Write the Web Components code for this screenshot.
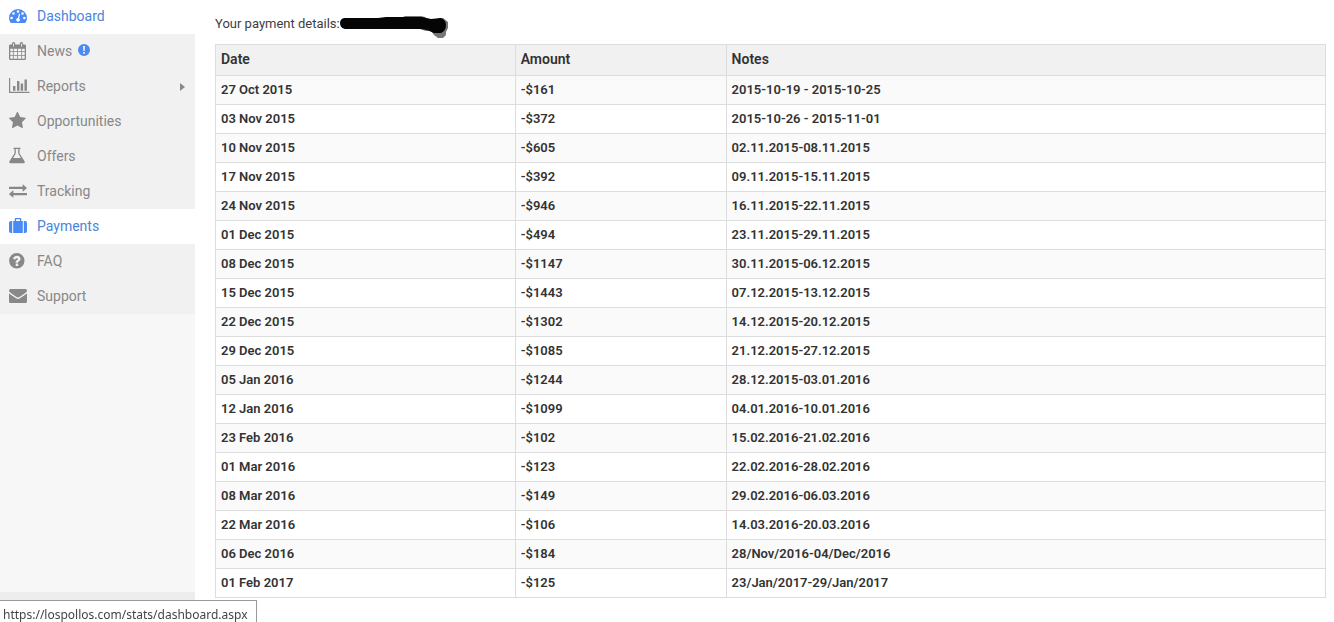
<!DOCTYPE html>
<html lang="en">
<head>
<meta charset="utf-8">
<meta name="viewport" content="width=device-width, initial-scale=1">
<title>Payments</title>
<style>
  body{
    margin:0;
    background:#fff;
    color:#3d3d3d;
    font:13px/18px Roboto, "Liberation Sans", sans-serif;
  }
</style>
</head>
<body>
<stats-layout>
  <side-menu slot="side">
    <menu-item icon="dashboard" href="#dashboard" active>Dashboard</menu-item>
    <menu-item icon="calendar" href="#news" alert>News</menu-item>
    <menu-item icon="chart" href="#reports" submenu>Reports</menu-item>
    <menu-item icon="star" href="#opportunities">Opportunities</menu-item>
    <menu-item icon="flask" href="#offers">Offers</menu-item>
    <menu-item icon="exchange" href="#tracking">Tracking</menu-item>
    <menu-item icon="suitcase" href="#payments" active>Payments</menu-item>
    <menu-item icon="question" href="#faq">FAQ</menu-item>
    <menu-item icon="envelope" href="#support">Support</menu-item>
  </side-menu>
  <payment-details>Your payment details:</payment-details>
  <payment-table></payment-table>
</stats-layout>
<status-bar>https://lospollos.com/stats/dashboard.aspx</status-bar>

<script>
(() => {
  // icons share a 22x19 canvas
  const ICONS = {
    dashboard: `<path fill-rule="evenodd" d="M9 2a9 9 0 0 1 9 9q0 2.6-1.4 4.6-.3.4-.8.4H2.2q-.5 0-.8-.4Q0 13.600 0 11a9 9 0 0 1 9-9zM2.600 9.700a1.300 1.300 0 1 0 0 2.600 1.300 1.300 0 0 0 0-2.600zM4.500 5.200a1.300 1.300 0 1 0 0 2.600 1.300 1.300 0 0 0 0-2.600zM9 3.300a1.300 1.300 0 1 0 0 2.600 1.300 1.300 0 0 0 0-2.600zM13.500 5.200a1.300 1.300 0 1 0 0 2.600 1.300 1.300 0 0 0 0-2.600zM15.400 9.700a1.300 1.300 0 1 0 0 2.600 1.300 1.300 0 0 0 0-2.600zM9.900 7.200l-1 3.800a1.900 1.900 0 1 0 1.200.3l1-3.700a.6.600 0 0 0-1.200-.4z"/>`,
    calendar: `<path fill-rule="evenodd" d="M1.300 2.500H3V1.600Q3 0 4.300 0h.5Q6.200 0 6.200 1.600v.9h4.600v-.9Q10.800 0 12.200 0h.5Q14 0 14 1.600v.9h1.700q1.300 0 1.300 1.300v12.900q0 1.300-1.300 1.300H1.300Q0 18 0 16.700V3.800q0-1.300 1.300-1.300zM4.200 1.200v3.500H5V1.200zM12 1.200v3.500h.8V1.200zM1.300 6.700v2.500h2.600V6.700zM4.700 6.700v2.500h3.400V6.700zM8.900 6.700v2.500h3.400V6.700zM13.100 6.700v2.500h2.600V6.700zM1.300 10v3h2.600v-3zM4.700 10v3h3.400v-3zM8.900 10v3h3.400v-3zM13.100 10v3h2.600v-3zM1.300 13.800v2.900h2.600v-2.900zM4.700 13.800v2.900h3.400v-2.900zM8.900 13.800v2.900h3.400v-2.900zM13.100 13.800v2.900h2.600v-2.900z"/>`,
    chart: `<path d="M0 1h1.200v13.800h19.300V16H0zM4 9h2.400v4.800H4zM8 4h2.400v9.800H8zM11.700 6.500h2.400v7.300h-2.400zM15.500 2.600h2.400v11.200h-2.400z"/>`,
    star: `<path transform="translate(-.7 -.5) scale(.0102)" d="M1728 647q0 22-26 48l-363 354 86 500q1 7 1 20 0 21-10.500 35.500t-30.500 14.500q-19 0-40-12l-449-236-449 236q-22 12-40 12-21 0-31.500-14.500t-10.500-35.500q0-6 2-20l86-500-364-354q-25-27-25-48 0-37 56-46l502-73 225-455q19-41 49-41t49 41l225 455 502 73q56 9 56 46z"/>`,
    flask: `<path fill-rule="evenodd" d="M5 .7h6q.7 0 .7.6t-.7.7h-.5v4.200l4.900 7.700q1.300 2.200-1.100 2.300H1.800q-2.400-.1-1.200-2.300l4.900-7.700V2H5q-.7 0-.7-.7T5 .7zM6.800 2v4.600L4.100 10.900h7.800L9.200 6.600V2z"/>`,
    exchange: `<path d="M0 4.800h13.600V2.700q0-.5.500-.2l3.600 3.200q.3.300 0 .6l-3.600 3.100q-.5.300-.5-.2V7.100H0zM18 10.900H4.400V8.800q0-.5-.5-.2L.3 11.800q-.3.300 0 .6l3.600 3.100q.5.300.5-.2v-2.100H18z"/>`,
    suitcase: `<path fill-rule="evenodd" d="M4.200 4h1.500V2.100Q5.700 1 6.800 1h4.400q1.100 0 1.100 1.100V4h1.500v12H4.200zM7 2.200V4h4V2.200zM2 4h1.200v12H2q-2 0-2-2V6q0-2 2-2zM16 4q2 0 2 2v8q0 2-2 2h-1.200V4z"/>`,
    question: `<path fill-rule="evenodd" d="M7.800 1a7.700 7.700 0 1 1 0 15.400A7.700 7.700 0 0 1 7.800 1zM6.700 11.700v2q0 .3.300.3h1.900q.3 0 .3-.3v-2q0-.3-.3-.3H7q-.3 0-.3.3zM4.200 6.500l1.400 1.100q.3.200.5-.1.900-1.200 1.700-1.200 1.100.1 1.100.9 0 .5-1.200 1.100-1.200.8-1.200 1.900v.2q0 .3.300.3h1.900q.3 0 .3-.3 0-.4.900-.9 1.700-.9 1.700-2.400Q11.500 3.800 8 3.700q-2.500 0-3.900 2.300-.1.300.1.500z"/>`,
    envelope: `<path d="M1.600 2h14.800Q18 2 18 3.500q0 1.200-1.700 2.400L10.800 9.700Q9.700 10.500 9 10.500t-1.800-.8L1.700 5.900Q0 4.700 0 3.500 0 2 1.600 2zM0 6.400l7 4.800q1.200.8 2 .8t2-.8l7-4.800v8q0 1.600-1.600 1.600H1.600Q0 16 0 14.400z"/>`
  };

  const PAYMENTS = [
    ['27 Oct 2015', '-$161', '2015-10-19 - 2015-10-25'],
    ['03 Nov 2015', '-$372', '2015-10-26 - 2015-11-01'],
    ['10 Nov 2015', '-$605', '02.11.2015-08.11.2015'],
    ['17 Nov 2015', '-$392', '09.11.2015-15.11.2015'],
    ['24 Nov 2015', '-$946', '16.11.2015-22.11.2015'],
    ['01 Dec 2015', '-$494', '23.11.2015-29.11.2015'],
    ['08 Dec 2015', '-$1147', '30.11.2015-06.12.2015'],
    ['15 Dec 2015', '-$1443', '07.12.2015-13.12.2015'],
    ['22 Dec 2015', '-$1302', '14.12.2015-20.12.2015'],
    ['29 Dec 2015', '-$1085', '21.12.2015-27.12.2015'],
    ['05 Jan 2016', '-$1244', '28.12.2015-03.01.2016'],
    ['12 Jan 2016', '-$1099', '04.01.2016-10.01.2016'],
    ['23 Feb 2016', '-$102', '15.02.2016-21.02.2016'],
    ['01 Mar 2016', '-$123', '22.02.2016-28.02.2016'],
    ['08 Mar 2016', '-$149', '29.02.2016-06.03.2016'],
    ['22 Mar 2016', '-$106', '14.03.2016-20.03.2016'],
    ['06 Dec 2016', '-$184', '28/Nov/2016-04/Dec/2016'],
    ['01 Feb 2017', '-$125', '23/Jan/2017-29/Jan/2017']
  ];

  class StatsLayout extends HTMLElement {
    constructor(){
      super();
      this.attachShadow({mode:'open'}).innerHTML = `
        <style>
          :host{ display:flex; min-height:100vh; }
          aside{ flex:0 0 195px; display:flex; }
          main{ flex:1; min-width:0; padding:14px 8px 16px 20px; }
        </style>
        <aside><slot name="side"></slot></aside>
        <main><slot></slot></main>
      `;
    }
  }

  class SideMenu extends HTMLElement {
    constructor(){
      super();
      this.attachShadow({mode:'open'}).innerHTML = `
        <style>
          :host{
            flex:1; display:flex; flex-direction:column;
            background:#f7f7f7;
          }
          nav{ margin-top:-1px; }
          .toggle{ margin-top:auto; height:30px; background:#ededed; }
        </style>
        <nav><slot></slot></nav>
        <div class="toggle"></div>
      `;
    }
  }

  class MenuItem extends HTMLElement {
    constructor(){
      super();
      this.attachShadow({mode:'open'});
    }

    connectedCallback(){
      const icon = ICONS[this.getAttribute('icon')] || '';
      this.shadowRoot.innerHTML = `
        <style>
          :host{ display:block; background:#f1f1f1; color:#888; }
          :host([active]){ background:#fff; color:#4a85dc; }
          a{
            display:flex; align-items:center;
            height:35px; padding:0 10px 0 9px;
            color:inherit; text-decoration:none;
            font-size:14px; line-height:20px;
          }
          span{ padding-bottom:2px; }
          svg{ fill:currentColor; flex:none; }
          .icon{ width:22px; height:19px; margin-right:6px; }
          :host([active]) .icon{ fill:#4a8af4; }
          .alert{ width:12px; height:12px; margin:0 0 4px 6px; fill:#4a8af4; }
          .arrow{ width:5px; height:8px; margin-left:auto; }
        </style>
        <a href="${this.getAttribute('href') || '#'}">
          <svg class="icon" viewBox="0 0 22 19" aria-hidden="true">${icon}</svg>
          <span><slot></slot></span>
          ${this.hasAttribute('alert') ? `
            <svg class="alert" viewBox="0 0 12 12" aria-hidden="true">
              <path fill-rule="evenodd" d="M6 0a6 6 0 1 1 0 12A6 6 0 0 1 6 0zM5 2l.3 5h1.400L7 2zM5.100 8v1.800h1.800V8z"/>
            </svg>` : ''}
          ${this.hasAttribute('submenu') ? `
            <svg class="arrow" viewBox="0 0 5 8" aria-hidden="true"><path d="M0 0l5 4-5 4z"/></svg>` : ''}
        </a>
      `;
    }
  }

  class PaymentDetails extends HTMLElement {
    constructor(){
      super();
      this.attachShadow({mode:'open'}).innerHTML = `
        <style>
          :host{ display:flex; height:30px; line-height:20px; }
          svg{ width:108px; height:24px; }
        </style>
        <span><slot></slot></span>
        <svg viewBox="0 0 108 24" aria-hidden="true">
          <path fill="#777" d="M45 4l6-1h12l2-1h16l4 1 2 2h10l2-1h4l5 4v6l-2 4v3l-3 3h-5l-4-3-3-4H86z"/>
          <path fill="#050505" d="M4 4h34l8-1h36l9 2 10-1q5 2 5 7 0 6-5 8h-7l-7-3-6-1H5q-5-1-5-6 0-4 4-5z"/>
        </svg>
      `;
    }
  }

  class PaymentTable extends HTMLElement {
    constructor(){
      super();
      this.attachShadow({mode:'open'});
    }

    connectedCallback(){
      const rows = PAYMENTS.map(row =>
        `<tr>${row.map(text => `<td>${text}</td>`).join('')}</tr>`
      ).join('');

      this.shadowRoot.innerHTML = `
        <style>
          :host{ display:block; }
          table{
            width:100%; table-layout:fixed;
            border-collapse:collapse;
            color:#333;
          }
          th, td{
            box-sizing:border-box;
            border:1px solid #ddd;
            padding:5px;
            text-align:left; font-weight:600;
          }
          th{ padding:4px 5px 6px; background:#f1f1f1; font-size:14px; line-height:20px; }
          tbody tr:nth-child(odd){ background:#fafafa; }
          .date{ width:27%; }
          .amount{ width:19%; }
        </style>
        <table>
          <thead>
            <tr><th class="date">Date</th><th class="amount">Amount</th><th>Notes</th></tr>
          </thead>
          <tbody>${rows}</tbody>
        </table>
      `;
    }
  }

  class StatusBar extends HTMLElement {
    constructor(){
      super();
      this.attachShadow({mode:'open'}).innerHTML = `
        <style>
          :host{
            position:fixed; left:0; bottom:0;
            padding:6px 8px 0 3px;
            border:solid #999; border-width:1px 1px 0 0;
            background:#fff; color:#444;
            font:12px/15px "Noto Sans", "Open Sans", sans-serif;
          }
        </style>
        <slot></slot>
      `;
    }
  }

  customElements.define('stats-layout', StatsLayout);
  customElements.define('side-menu', SideMenu);
  customElements.define('menu-item', MenuItem);
  customElements.define('payment-details', PaymentDetails);
  customElements.define('payment-table', PaymentTable);
  customElements.define('status-bar', StatusBar);
})();
</script>
</body>
</html>
